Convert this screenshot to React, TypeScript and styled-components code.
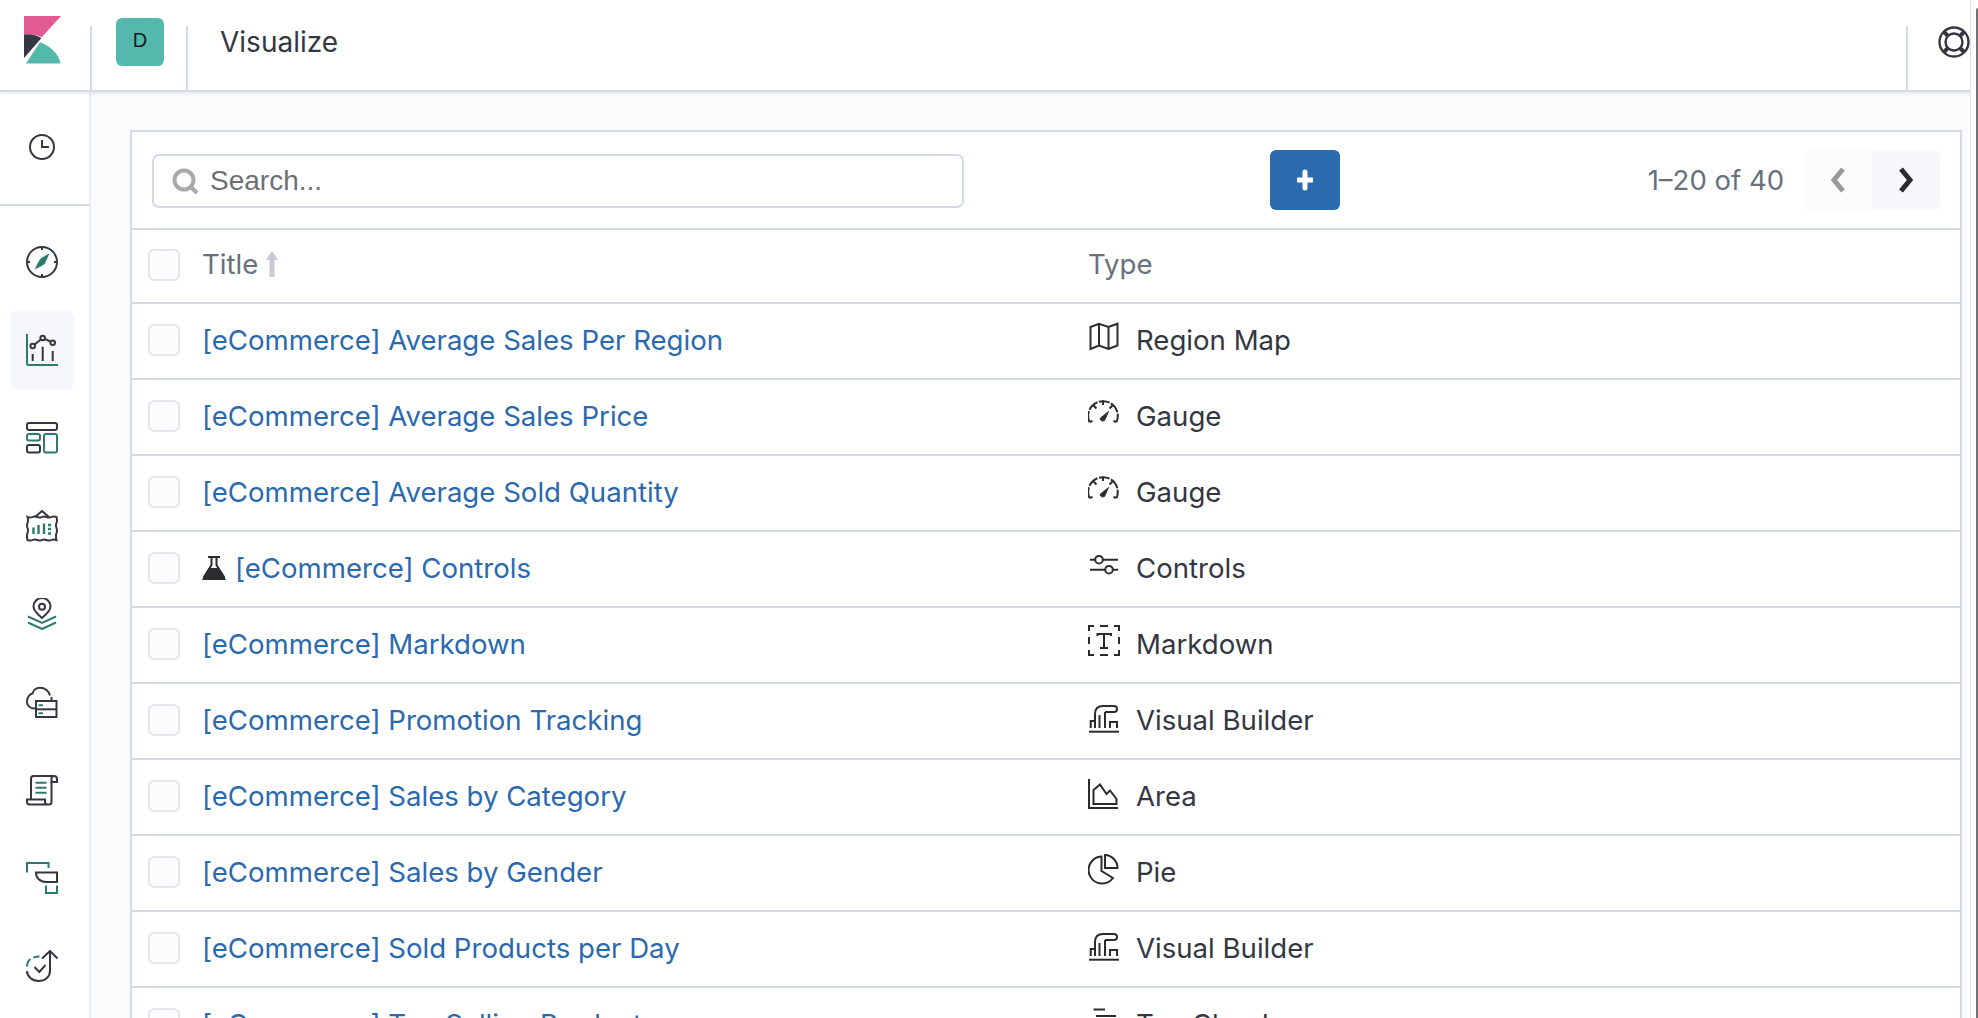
import React from "react";
import styled, { createGlobalStyle } from "styled-components";

const Global = createGlobalStyle`
  html, body { margin: 0; padding: 0; height: 100%; overflow: hidden; background: #fff; }
  body { font-family: Inter, "Liberation Sans", sans-serif; }
  #root { height: 1018px; }
`;

const Page = styled.div`
  width: 1978px; height: 1018px; display: grid;
  grid-template-columns: 1fr 8px; overflow: hidden; background: #fff;
`;
const Main = styled.div`display: flex; flex-direction: column; min-width: 0; height: 1018px;`;
const ScrollRail = styled.div`
  background: #fff; border-left: 1px solid #e6e7ea; padding-top: 8px; display: flex; justify-content: flex-end; box-sizing: border-box;
`;
const ScrollThumb = styled.div`width: 2px; background: #6f7175; border-radius: 2px 0 0 0;`;

const Header = styled.header`
  height: 90px; flex: none; display: flex; background: #fff;
  border-bottom: 2px solid #d3dae6; box-shadow: 0 2px 3px rgba(152,162,179,.2); position: relative; z-index: 2;
`;
const LogoCell = styled.div`width: 90px; flex: none; padding: 16px 0 0 24px; box-sizing: border-box;`;
const HeaderCell = styled.div`
  flex: none; display: flex; margin-top: 26px; border-left: 2px solid #d3dae6;
`;
const AvatarCell = styled(HeaderCell)`width: 96px; padding-left: 24px; box-sizing: border-box;`;
const Avatar = styled.div`
  width: 48px; height: 48px; margin-top: -8px; padding-bottom: 3px; box-sizing: border-box; border-radius: 6px; background: #54b9ac; color: #1a1c21;
  display: flex; align-items: center; justify-content: center; font-size: 20px; font-family: "Liberation Sans", Arial, sans-serif;
`;
const TitleCell = styled(HeaderCell)`flex: 1; padding-left: 32px; font-size: 28px; color: #343741; font-weight: 400; line-height: 32px;`;
const HelpCell = styled(HeaderCell)`width: 64px; box-sizing: border-box; padding-left: 30px;`;
const HelpIcon = styled.div`height: 32px;`;

const Body = styled.div`flex: 1; min-height: 0; display: flex;`;
const Nav = styled.nav`
  width: 91px; flex: none; background: #fff; border-right: 2px solid #e9edf3; box-sizing: border-box;
  display: flex; flex-direction: column;
`;
const RecentBlock = styled.div`
  height: 114px; flex: none; border-bottom: 2px solid #d3dae6; display: flex; align-items: center; justify-content: center; padding: 0 6px 2px 0; box-sizing: border-box;
`;
const NavList = styled.div`display: flex; flex-direction: column; gap: 8px; padding: 16px 0 0 10px;`;
const NavItem = styled.div<{ $active?: boolean }>`
  width: 64px; height: 80px; flex: none; border-radius: 8px; display: flex; align-items: center; justify-content: center;
  background: ${(p) => (p.$active ? "#f5f7fa" : "transparent")};
`;
const Content = styled.main`
  flex: 1; min-width: 0; background: #fafbfd; padding: 38px 8px 0 39px; overflow: hidden;
`;
const Panel = styled.section`
  border: 2px solid #d3dae6; border-bottom: 0; background: #fff;
`;
const Toolbar = styled.div`
  height: 96px; display: grid; grid-template-columns: 812px 306px 70px 1fr; align-items: center; padding: 0 20px; box-sizing: border-box;
`;
const SearchBox = styled.div`
  height: 54px; margin-top: 2px; box-sizing: border-box; border: 2px solid #d3dae6; border-radius: 7px; background: #fff;
  display: flex; align-items: center; gap: 11px; padding: 0 0 0 18px;
  color: #6e6f72; font-family: "Liberation Sans", Arial, sans-serif; font-size: 28px;
`;
const AddButton = styled.button`
  grid-column: 3; width: 70px; height: 60px; border: 0; border-radius: 6px; background: #2b6bb0; padding: 0;
  display: flex; align-items: center; justify-content: center;
`;
const Pager = styled.div`display: flex; align-items: center; justify-content: flex-end;`;
const PagerText = styled.span`font-size: 27.5px; color: #69707d; margin-right: 20px; white-space: nowrap;`;
const PagerGroup = styled.div`display: flex; border-radius: 6px; overflow: hidden;`;
const PagerBtn = styled.div<{ $on?: boolean }>`
  width: 68px; height: 60px; display: flex; align-items: center; justify-content: center;
  background: ${(p) => (p.$on ? "#f5f7fa" : "#fafbfd")};
`;
const Row = styled.div<{ $head?: boolean }>`
  height: ${(p) => (p.$head ? "68px" : "72px")};
  padding-bottom: ${(p) => (p.$head ? "4px" : "2px")};
  border-top: 2px solid #d3dae6;
  display: grid; grid-template-columns: 70px 886px 1fr; align-items: center; font-size: 27.6px;
`;
const CheckCell = styled.div<{ $head?: boolean }>`display: flex; padding-left: 16px; margin-top: ${(p) => (p.$head ? "2px" : "0")};`;
const Check = styled.div`
  width: 32px; height: 32px; box-sizing: border-box; border: 2px solid #e4e5e8; border-radius: 6px; background: #fbfcfe;
`;
const HeadText = styled.div`display: flex; align-items: center; gap: 7px; color: #69707d;`;
const TitleLink = styled.a`display: flex; align-items: center; gap: 9px; color: #2a69ae; text-decoration: none; white-space: nowrap;`;
const TypeCell = styled.div`display: flex; align-items: center; gap: 15px; color: #343741; white-space: nowrap;`;
const TypeIcon = styled.span`display: inline-flex; width: 33px; margin-bottom: 6px;`;

const D = "#343741";
const G = "#2f7a6f";
const I = ({ children }: { children: React.ReactNode }) => (
  <svg width={32} height={32} viewBox="0 0 32 32" fill="none" strokeWidth={2} stroke={D}>{children}</svg>
);

const Logo = () => (
  <svg width="38" height="48" viewBox="0 0 38 48">
    <path d="M0 0H37L18 21C13 19 6 17.500 0 18.500Z" fill="#e05a94" />
    <path d="M0 18.500C6 17.500 13 19 17.500 22L0 42Z" fill="#343741" />
    <path d="M2 47.500L16 26C26 30 35 38 36.700 47.500Z" fill="#54b9ac" />
  </svg>
);

const navIcons: React.ReactNode[] = [
  <I key="compass"><circle cx="16" cy="16" r="15" /><path d="M16 1v3M16 28v3M1 16h3M28 16h3" /><path d="M23.500 7.500C18 10 15 12 13.500 14L8.500 23.500C14 21 17.500 19 19 17.500Z" fill={G} stroke="none" /></I>,
  <I key="viz"><path d="M1 0v30q0 1 1 1h30" stroke={G} /><circle cx="6.700" cy="12" r="2.300" /><circle cx="16.700" cy="4" r="2.300" /><circle cx="26.700" cy="8.700" r="2.300" /><path d="M8.500 10.500l6.400-5M18.800 5l5.800 2.700M6.700 20v7M16.700 12.700V27M26.700 17v10" /></I>,
  <I key="dash"><rect x="1" y="1" width="30" height="7" rx="2" /><rect x="1" y="12" width="13" height="6.500" rx="2" stroke={G} /><rect x="1" y="23" width="13" height="7.500" rx="2" /><rect x="18" y="12" width="13" height="18.500" rx="2" stroke={G} /></I>,
  <I key="canvas"><path d="M9 7 16 1l7 6" /><path d="M1.500 7q3 1.200 5 0t5 0 4.500 0 4.500 0 5 0 5 0q1 4 0 6t0 5 0 5 0 7q-3-1.200-5 0t-5 0-4.500 0-4.500 0-5 0-5 0q-1-4 0-7t0-5 0-5 0-6Z" /><path d="M7.500 17.500V24M12.500 15V24M18 13.500V24" stroke={G} strokeWidth="2.400" /><path d="M22 15h3M22 19h3M22 23.500h3" stroke={G} strokeWidth="2.400" /></I>,
  <I key="maps"><path d="M16 20C10 15 7.500 12 7.500 8.500A8.500 8.500 0 0 1 24.500 8.500C24.500 12 22 15 16 20Z" /><circle cx="16" cy="8.700" r="3" /><path d="M2 18.500 16 25l14-6.500" stroke={G} /><path d="M2 24.500 16 31l14-6.500" stroke={G} /></I>,
  <I key="infra"><path d="M9 22.500C4 22.500 1 19.500 1 15.700 1 11.500 3.500 8 6.500 7.500 7.500 4 10 1.700 14 1.700 19 1.700 23 5 24 9.500M25.500 11v3.500" /><rect x="10" y="15" width="20.500" height="16" /><path d="M10 23.300h20.500" /><path d="M12.500 19.300h4.500M12.500 27.300h4.500" stroke={G} /></I>,
  <I key="logs"><path d="M5 25V4.500Q5 2 7.500 2H28Q31 2 31 5V8H25.500V5Q25.500 2 28 2" /><path d="M25.500 8V28Q25.500 30.500 23 30.500H4Q1 30.500 1 28V25.500H19V28Q19 30.500 22 30.500" /><path d="M9.500 8.700h11M9.500 13.700h11M9.500 18.700h11" stroke={G} /></I>,
  <I key="apm"><path d="M1 10.500V1H22.500V6" stroke={G} /><path d="M10 10.500H31V20H20C14 20 10 16 10 10.500Z" /><path d="M20 23.500V31H31V23.500" stroke={G} /></I>,
  <I key="uptime"><path d="M24 1.500V21C24 27 19 31 12.500 31 6 31 1 26.500 1 21" /><path d="M16 8.500 24 1l7.500 7.500" /><path d="M1 16.500C1 13 2.300 10.500 4.500 9M7.500 7.500C9.500 6.800 11.500 6.500 13.500 6.500" stroke={G} /><path d="M8.500 17 13.300 22 19.500 15" /></I>,
];

const Clock = () => <svg width="26" height="26" viewBox="0 0 26 26" fill="none" stroke={D} strokeWidth="2"><circle cx="13" cy="13" r="12" /><path d="M13 6v7h7" /></svg>;
const Help = () => <svg width="32" height="32" viewBox="0 0 32 32" fill="none" stroke={D}><circle cx="16" cy="16" r="14.500" strokeWidth="2.400" /><circle cx="16" cy="16" r="8.500" strokeWidth="2.400" /><path d="M6 6l4.500 4.500M26 6l-4.500 4.500M6 26l4.500-4.500M26 26l-4.500-4.500" strokeWidth="4" /></svg>;
const SearchIcon = () => <svg width="27" height="27" viewBox="0 0 27 27" fill="none" stroke="#a9a9a9" strokeWidth="4"><circle cx="12" cy="12" r="9.500" /><path d="M19 19l6 6" /></svg>;
const Plus = () => <svg width="16" height="22" viewBox="0 0 16 22"><path d="M8 3v16M1 11h14" stroke="#fff" strokeWidth="5" strokeLinecap="round" /></svg>;
const Chevron = ({ dir, color }: { dir: "l" | "r"; color: string }) => <svg width="16" height="26" viewBox="0 0 16 26" fill="none" stroke={color} strokeWidth="5"><path d={dir === "l" ? "M13 2 4 13l9 11" : "M3 2l9 11L3 24"} /></svg>;
const SortArrow = () => <svg width="14" height="28" viewBox="0 0 14 28"><path d="M7 1 13 10H9.500v17h-5V10H1Z" fill="#c8ccd2" /></svg>;
const Flask = () => <svg width="24" height="24" viewBox="0 0 24 24"><path d="M6 1h12M9.500 1v8L2 21q-.8 2 1.500 2h17q2.300 0 1.500-2L14.500 9V1" fill="none" stroke="#2b2c30" strokeWidth="2" /><path d="M7 12h10l7 12H0Z" fill="#2b2c30" /></svg>;

const S = "#2b2c30";
const TI = ({ children }: { children: React.ReactNode }) => <svg width="33" height="33" viewBox="0 0 33 33" fill="none" stroke={S} strokeWidth="2">{children}</svg>;
const types: Record<string, React.ReactNode> = {
  "Region Map": <TI><path d="M2.500 6 11 2.700 20.500 6 29.500 2.700V24.500L20.500 28 11 24.500 2.500 28ZM11 2.700V24.500M20.500 6V28" /></TI>,
  Gauge: <TI><path d="M1.500 25A14.800 14.800 0 1 1 28.500 25" strokeDasharray="11 1.500" /><path d="M15 3.500V8M5.500 8.500 8.500 11.500M24.500 8.500 21.500 11.500M1.500 25 4.500 24M28.500 25 25.500 24" /><path d="M12 21.500 20.500 14.500 16.500 23.500Q13 25 12 21.500Z" fill={S} strokeWidth="1" /></TI>,
  Controls: <TI><path d="M2 10.700H7M15 10.700H30M2 20.700H17M25 20.700H30" /><circle cx="11" cy="10.700" r="3.800" /><circle cx="21" cy="20.700" r="3.800" /></TI>,
  Markdown: <TI><path d="M1 6V1H6M12 1H20M26 1H31V6M1 12V19M31 12V19M1 25V30H6M12 30H20M26 30H31V25" /><path d="M9.500 11V9H23V11M16 9V23M12 23H20" /></TI>,
  "Visual Builder": <TI><path d="M7 27V13C7 8 10 5 15 5H26C30 5 30 11 26 11H17" /><path d="M11.500 27V14M17 11V27" /><path d="M2.700 27V20H7M22 27V21H29V27" /><path d="M1 30.700H31" /></TI>,
  Area: <TI><path d="M1 2V31H30" /><path d="M5.500 27V13L12 7.500 18.500 17 22 13.500 28.500 22V27Z" /></TI>,
  Pie: <TI><g transform="translate(0 1)"><path d="M13.500 2.500A13.500 13.500 0 1 0 25 24L13.500 17Z" /><path d="M17 1A13 13 0 0 1 29.500 14H17Z" /></g></TI>,
  "Tag Cloud": <TI><path d="M5.500 4.500H17M8 11H28M5 18H25M10 25H22" /></TI>,
};

const data: [string, string, boolean?][] = [
  ["[eCommerce] Average Sales Per Region", "Region Map"],
  ["[eCommerce] Average Sales Price", "Gauge"],
  ["[eCommerce] Average Sold Quantity", "Gauge"],
  ["[eCommerce] Controls", "Controls", true],
  ["[eCommerce] Markdown", "Markdown"],
  ["[eCommerce] Promotion Tracking", "Visual Builder"],
  ["[eCommerce] Sales by Category", "Area"],
  ["[eCommerce] Sales by Gender", "Pie"],
  ["[eCommerce] Sold Products per Day", "Visual Builder"],
  ["[eCommerce] Top Selling Products", "Tag Cloud"],
];

export default function App() {
  return (
    <Page>
      <Global />
      <Main>
        <Header>
          <LogoCell><Logo /></LogoCell>
          <AvatarCell><Avatar>D</Avatar></AvatarCell>
          <TitleCell>Visualize</TitleCell>
          <HelpCell><HelpIcon><Help /></HelpIcon></HelpCell>
        </Header>
        <Body>
          <Nav>
            <RecentBlock><Clock /></RecentBlock>
            <NavList>
              {navIcons.map((ic, i) => <NavItem key={i} $active={i === 1}>{ic}</NavItem>)}
            </NavList>
          </Nav>
          <Content>
            <Panel>
              <Toolbar>
                <SearchBox><SearchIcon />Search...</SearchBox>
                <AddButton aria-label="Create"><Plus /></AddButton>
                <Pager>
                  <PagerText>1–20 of 40</PagerText>
                  <PagerGroup>
                    <PagerBtn><Chevron dir="l" color="#98999b" /></PagerBtn>
                    <PagerBtn $on><Chevron dir="r" color="#2b2c30" /></PagerBtn>
                  </PagerGroup>
                </Pager>
              </Toolbar>
              <Row $head>
                <CheckCell $head><Check /></CheckCell>
                <HeadText>Title <SortArrow /></HeadText>
                <HeadText>Type</HeadText>
              </Row>
              {data.map(([t, k, flask]) => (
                <Row key={t}>
                  <CheckCell><Check /></CheckCell>
                  <TitleLink href="#">{flask && <Flask />}{t}</TitleLink>
                  <TypeCell><TypeIcon>{types[k]}</TypeIcon>{k}</TypeCell>
                </Row>
              ))}
            </Panel>
          </Content>
        </Body>
      </Main>
      <ScrollRail><ScrollThumb /></ScrollRail>
    </Page>
  );
}
